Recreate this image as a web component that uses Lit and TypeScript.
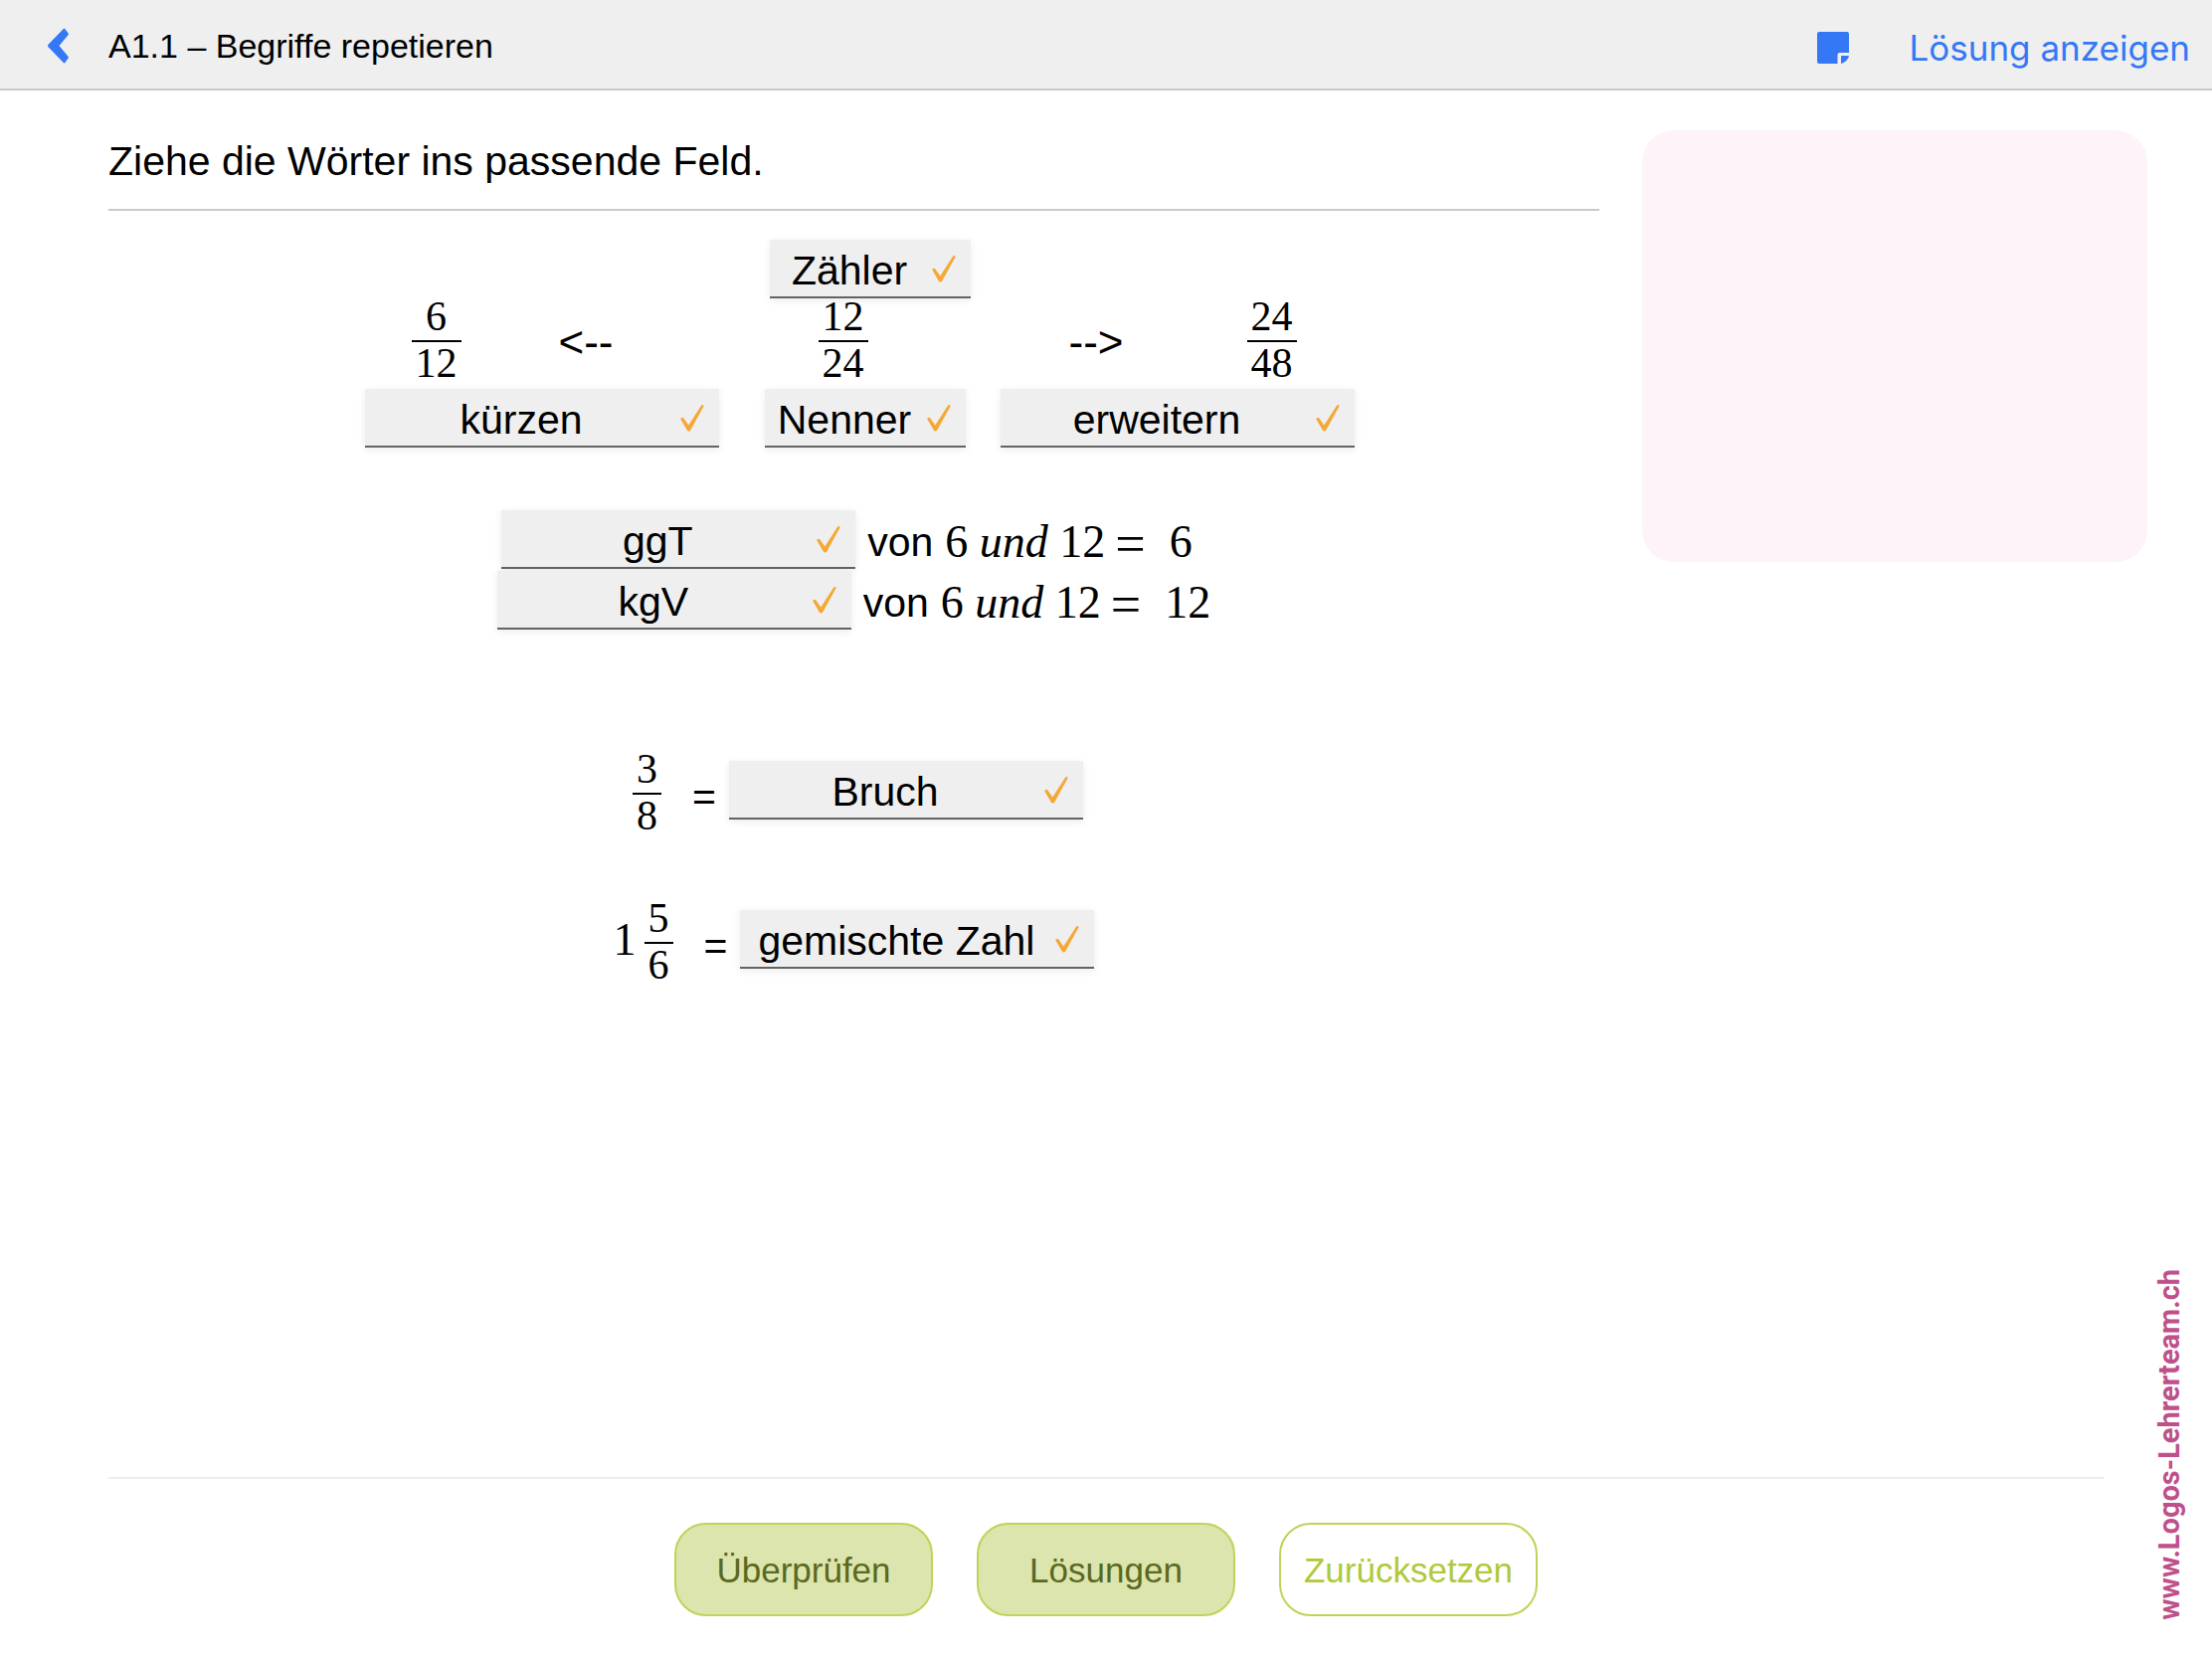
import { LitElement, html, css, svg } from "lit";
import { customElement, property } from "lit/decorators.js";

/** A draggable word that has been dropped into its field and marked correct. */
@customElement("word-chip")
export class WordChip extends LitElement {
  @property() word = "";

  static styles = css`
    :host {
      display: inline-block;
      width: 356px;
    }
    :host([small]) {
      width: 202px;
    }
    .chip {
      display: flex;
      align-items: center;
      justify-content: center;
      box-sizing: border-box;
      width: 100%;
      height: 59px;
      margin: 0;
      padding: 4px 42px 0 0;
      position: relative;
      border: 0;
      border-bottom: 2px solid #636363;
      border-radius: 0;
      background: #efefef;
      box-shadow: 0 2px 8px rgba(0, 0, 0, 0.08);
      color: #000;
      font: 41px/48px "Liberation Sans", Arial, sans-serif;
      white-space: nowrap;
      cursor: grab;
    }
    .tick {
      position: absolute;
      right: 15px;
      top: 15px;
      width: 24px;
      height: 28px;
    }
  `;

  render() {
    return html`<button class="chip" type="button">
      ${this.word}
      <svg class="tick" viewBox="0 0 24 28" aria-hidden="true">
        <path
          d="M.4 15.6C.1 14 2.4 13.2 3.4 14.5L8.3 21.6 21.2 1.5C22 .4 24 1 23.5 2.600L10.400 26.200C9.600 27.700 7.700 27.800 6.800 26.400Z"
          fill="#f4a836"
        />
      </svg>
    </button>`;
  }
}

/** A fraction with a horizontal bar. */
@customElement("math-fraction")
export class MathFraction extends LitElement {
  @property() top = "";
  @property() bottom = "";

  static styles = css`
    :host {
      display: inline-flex;
      flex-direction: column;
      text-align: center;
      padding-bottom: 8px;
      font: 42px/40px "Liberation Serif", "Times New Roman", serif;
    }
    .numerator {
      padding: 0 4px 4px;
      border-bottom: 2px solid #000;
    }
    .denominator {
      padding: 1px 4px 0;
    }
  `;

  render() {
    return html`<span class="numerator">${this.top}</span
      ><span class="denominator">${this.bottom}</span>`;
  }
}

@customElement("app-root")
export class AppRoot extends LitElement {
  static styles = css`
    :host {
      display: flex;
      flex-direction: column;
      min-height: 100vh;
      background: #fff;
      color: #000;
      font: 41px/48px "Liberation Sans", Arial, sans-serif;
    }
    .bar {
      display: flex;
      align-items: center;
      box-sizing: border-box;
      height: 91px;
      padding: 2px 22px 0 48px;
      border-bottom: 2px solid #cacaca;
      background: #efefef;
    }
    .back,
    .note,
    .solution {
      padding: 0;
      border: 0;
      background: none;
      color: #3478f6;
      cursor: pointer;
    }
    .back {
      width: 61px;
      height: 36px;
      text-align: left;
    }
    .back svg,
    .note svg {
      display: block;
    }
    .name {
      flex: 1;
      margin: 0;
      font-size: 34px;
      font-weight: 400;
      line-height: 40px;
    }
    .note {
      margin: 4px 60px 0 0;
    }
    .solution {
      padding-top: 4px;
      font: 35px/44px Inter, Roboto, sans-serif;
    }
    .page {
      flex: 1;
      display: grid;
      grid-template-columns: minmax(0, 1fr) 65px;
    }
    .sheet {
      display: flex;
      flex-direction: column;
      padding-left: 109px;
    }
    .work {
      flex: 1;
      display: grid;
      grid-template-columns: minmax(0, 1fr) 508px;
      column-gap: 43px;
      align-items: start;
    }
    .panel {
      height: 434px;
      margin-top: 40px;
      border-radius: 32px;
      background: #fdf3f8;
    }
    .task {
      margin: 47px 0 29px;
      padding-bottom: 24px;
      border-bottom: 2px solid #cacaca;
      font-size: 41px;
      font-weight: 400;
      line-height: 48px;
    }
    .row {
      display: flex;
      justify-content: center;
      align-items: center;
      white-space: pre;
    }
    .head {
      padding-left: 33px;
    }
    .fractions {
      height: 91px;
    }
    .to-left,
    .to-right {
      font-size: 44px;
      line-height: 48px;
      padding-bottom: 4px;
    }
    .to-left {
      margin: 0 206px 0 98px;
    }
    .to-right {
      margin: 0 124px 0 202px;
    }
    .names {
      padding-left: 12px;
      margin-bottom: 63px;
    }
    .nenner {
      margin: 0 35px 0 46px;
    }
    .sentence {
      height: 59px;
      margin-bottom: 2px;
    }
    .ggt {
      padding-right: 14px;
    }
    .von {
      margin: 0 12px;
      padding-top: 4px;
    }
    .math {
      font: 46px/48px "Liberation Serif", "Times New Roman", serif;
    }
    .sentence .math {
      padding-top: 4px;
    }
    .equals {
      margin: 0 24px 0 10px;
      padding-top: 8px;
      font: 54px/48px "Liberation Serif", "Times New Roman", serif;
    }
    .equation {
      height: 95px;
      margin-bottom: 55px;
    }
    .first {
      margin-top: 120px;
      padding-left: 8px;
    }
    .sign {
      margin: 0 13px 0 31px;
    }
    .raised {
      margin-bottom: 12px;
    }
    .whole {
      margin-right: 8px;
    }
    .actions {
      display: flex;
      justify-content: center;
      gap: 44px;
      margin-right: 44px;
      padding: 44px 0 43px;
      border-top: 2px solid #ededed;
    }
    .action {
      width: 260px;
      height: 94px;
      padding: 2px 0 0;
      border: 2px solid #bfd358;
      border-radius: 32px;
      background: #dce5ad;
      color: #5a6920;
      font: 35px/40px "Liberation Sans", Arial, sans-serif;
      cursor: pointer;
    }
    .plain {
      background: #fff;
      color: #b0c93a;
    }
    .site {
      align-self: end;
      justify-self: start;
      margin: 0 0 39px 4px;
      writing-mode: vertical-rl;
      transform: rotate(180deg);
      color: #c0508a;
      font: 700 29px/36px Roboto, "Open Sans", sans-serif;
      text-decoration: none;
    }
  `;

  private backIcon = svg`<svg width="21" height="36" viewBox="0 0 21 36" aria-hidden="true">
    <path d="M15.6 1.2c.5-.8 1.200-.8 1.700-.1l3.300 4.400c.4.6.4 1 .1 1.600L11.500 18l9.200 10.900c.3.6.3 1-.1 1.600l-3.300 4.400c-.5.700-1.200.7-1.700-.1L.5 19.200c-.6-.9-.6-1.500 0-2.400z" fill="currentColor"/>
  </svg>`;

  private noteIcon = svg`<svg width="32" height="32" viewBox="0 0 32 32" aria-hidden="true">
    <path d="M2 0h28a2 2 0 0 1 2 2v19h-9.500a2 2 0 0 0-2 2v9H2a2 2 0 0 1-2-2V2a2 2 0 0 1 2-2zM24.500 24H32c-.5 3.500-4 7-8 8v-7.500z" fill="currentColor"/>
  </svg>`;

  render() {
    return html`
      <header class="bar">
        <button class="back" type="button" aria-label="Zurück">${this.backIcon}</button>
        <h1 class="name">A1.1 – Begriffe repetieren</h1>
        <button class="note" type="button" aria-label="Notiz">${this.noteIcon}</button>
        <button class="solution" type="button">Lösung anzeigen</button>
      </header>
      <div class="page">
        <div class="sheet">
          <div class="work">
            <main>
              <h2 class="task">Ziehe die Wörter ins passende Feld.</h2>
              <div class="row head"><word-chip small word="Zähler"></word-chip></div>
              <div class="row fractions">
                <math-fraction top="6" bottom="12"></math-fraction>
                <span class="to-left">&lt;--</span>
                <math-fraction top="12" bottom="24"></math-fraction>
                <span class="to-right">--&gt;</span>
                <math-fraction top="24" bottom="48"></math-fraction>
              </div>
              <div class="row names">
                <word-chip word="kürzen"></word-chip>
                <word-chip class="nenner" small word="Nenner"></word-chip>
                <word-chip word="erweitern"></word-chip>
              </div>
              <div class="row sentence ggt">
                <word-chip word="ggT"></word-chip>
                <span class="von">von</span>
                <span class="math">6 <i>und</i> 12</span>
                <span class="equals">=</span>
                <span class="math">6</span>
              </div>
              <div class="row sentence">
                <word-chip word="kgV"></word-chip>
                <span class="von">von</span>
                <span class="math">6 <i>und</i> 12</span>
                <span class="equals">=</span>
                <span class="math">12</span>
              </div>
              <div class="row equation first">
                <math-fraction top="3" bottom="8"></math-fraction>
                <span class="sign">=</span>
                <word-chip class="raised" word="Bruch"></word-chip>
              </div>
              <div class="row equation">
                <span class="math whole raised">1</span>
                <math-fraction top="5" bottom="6"></math-fraction>
                <span class="sign">=</span>
                <word-chip class="raised" word="gemischte Zahl"></word-chip>
              </div>
            </main>
            <aside class="panel"></aside>
          </div>
          <footer class="actions">
            <button class="action" type="button">Überprüfen</button>
            <button class="action" type="button">Lösungen</button>
            <button class="action plain" type="button">Zurücksetzen</button>
          </footer>
        </div>
        <a class="site" href="http://www.Logos-Lehrerteam.ch">www.Logos-Lehrerteam.ch</a>
      </div>
    `;
  }
}
